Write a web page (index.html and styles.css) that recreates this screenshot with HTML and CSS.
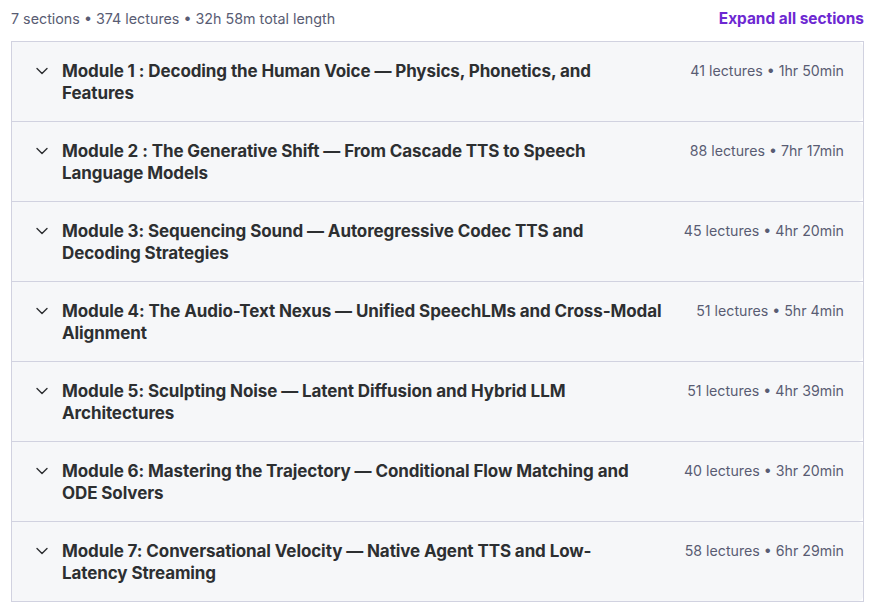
FILE: index.html
```html
<!DOCTYPE html>
<html lang="en">
<head>
<meta charset="utf-8">
<title>Course content</title>
<link rel="stylesheet" href="styles.css">
</head>
<body>
<div class="page">
  <div class="summary">
    <span class="meta">7 sections • 374 lectures • 32h 58m total length</span>
    <button class="expand">Expand all sections</button>
  </div>
  <div class="sections">
    <div class="section"><div class="head">
      <svg class="chev" viewBox="0 0 16 16"><path d="M3 5.5 8 10.5l5-5"/></svg>
      <div class="title">Module 1 : Decoding the Human Voice — Physics, Phonetics, and Features</div>
      <div class="stats">41 lectures • 1hr 50min</div>
    </div></div>
    <div class="section"><div class="head">
      <svg class="chev" viewBox="0 0 16 16"><path d="M3 5.5 8 10.5l5-5"/></svg>
      <div class="title">Module 2 : The Generative Shift — From Cascade TTS to Speech Language Models</div>
      <div class="stats">88 lectures • 7hr 17min</div>
    </div></div>
    <div class="section"><div class="head">
      <svg class="chev" viewBox="0 0 16 16"><path d="M3 5.5 8 10.5l5-5"/></svg>
      <div class="title">Module 3: Sequencing Sound — Autoregressive Codec TTS and Decoding Strategies</div>
      <div class="stats">45 lectures • 4hr 20min</div>
    </div></div>
    <div class="section"><div class="head">
      <svg class="chev" viewBox="0 0 16 16"><path d="M3 5.5 8 10.5l5-5"/></svg>
      <div class="title">Module 4: The Audio-Text Nexus — Unified SpeechLMs and Cross-Modal Alignment</div>
      <div class="stats">51 lectures • 5hr 4min</div>
    </div></div>
    <div class="section"><div class="head">
      <svg class="chev" viewBox="0 0 16 16"><path d="M3 5.5 8 10.5l5-5"/></svg>
      <div class="title">Module 5: Sculpting Noise — Latent Diffusion and Hybrid LLM Architectures</div>
      <div class="stats">51 lectures • 4hr 39min</div>
    </div></div>
    <div class="section"><div class="head">
      <svg class="chev" viewBox="0 0 16 16"><path d="M3 5.5 8 10.5l5-5"/></svg>
      <div class="title">Module 6: Mastering the Trajectory — Conditional Flow Matching and ODE Solvers</div>
      <div class="stats">40 lectures • 3hr 20min</div>
    </div></div>
    <div class="section"><div class="head">
      <svg class="chev" viewBox="0 0 16 16"><path d="M3 5.5 8 10.5l5-5"/></svg>
      <div class="title">Module 7: Conversational Velocity — Native Agent TTS and Low-Latency Streaming</div>
      <div class="stats">58 lectures • 6hr 29min</div>
    </div></div>
  </div>
</div>
</body>
</html>
```
FILE: styles.css
```css
* { box-sizing: border-box; }
html, body { margin: 0; background: #fff; }
body {
  font-family: Inter, "Noto Sans", sans-serif;
  color: #2d2f31;
}
.page {
  padding: 7px 9px 0 11px;
}
.summary {
  display: flex;
  justify-content: space-between;
  align-items: center;
  height: 22px;
  margin-bottom: 12px;
}
.meta {
  font-size: 14.3px;
  color: #595c73;
}
.expand {
  border: 0;
  background: none;
  padding: 0;
  margin-right: 0;
  font-family: inherit;
  font-size: 15.4px;
  font-weight: 700;
  color: #6d28d2;
  cursor: pointer;
}
.sections {
  border: 1px solid #d1d2e0;
}
.section {
  border-bottom: 1px solid #d1d2e0;
}
.section:last-child { border-bottom: 0; }
.head {
  display: flex;
  align-items: flex-start;
  background: #f6f7f9;
  border-radius: 0 5px 5px 0;
  padding: 18px 19px 17px 22px;
  min-height: 79px;
}
.chev {
  width: 16px;
  height: 16px;
  flex: none;
  margin-top: 3px;
  fill: none;
  stroke: #2d2f31;
  stroke-width: 1.4;
  stroke-linecap: round;
  stroke-linejoin: round;
}
.title {
  flex: 1;
  margin-left: 12px;
  font-size: 17px;
  font-weight: 700;
  line-height: 22px;
  letter-spacing: -0.1px;
  color: #2d2f31;
  padding-right: 34px;
}
.stats {
  flex: none;
  font-size: 14.2px;
  line-height: 22px;
  color: #595c73;
}
```
